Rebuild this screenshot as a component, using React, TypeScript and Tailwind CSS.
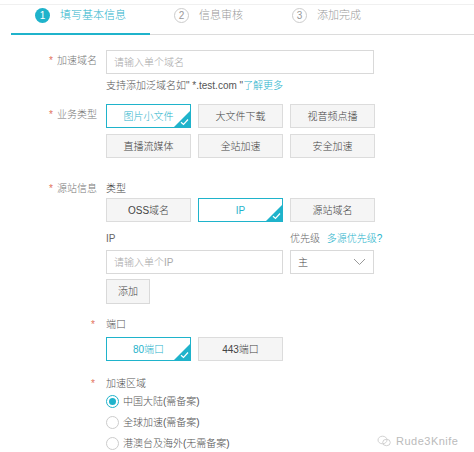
import React from "react";

function Check() {
  return (
    <span className="absolute right-0 bottom-0 w-[16px] h-[16px] overflow-hidden">
      <span className="absolute right-0 bottom-0 w-0 h-0 border-l-[16px] border-l-transparent border-b-[16px] border-b-[#1fb3cb]" />
      <svg className="absolute right-[1px] bottom-[1px]" width="9" height="8" viewBox="0 0 9 8">
        <path d="M1 4.2 L3.5 6.5 L8 1.5" stroke="#fff" strokeWidth="1.2" fill="none" />
      </svg>
    </span>
  );
}

function Btn({ label, selected, w = "w-[85px]" }: { label: string; selected?: boolean; w?: string }) {
  return selected ? (
    <div className={`relative ${w} h-[24px] flex items-center justify-center border border-[#1fb3cb] bg-white text-[#1fb3cb] text-[10px] font-light`}>
      {label}
      <Check />
    </div>
  ) : (
    <div className={`${w} h-[24px] flex items-center justify-center border border-[#dcdcdc] bg-[#f5f5f5] text-[#444] text-[10px] font-light`}>
      {label}
    </div>
  );
}

function Label({ text }: { text: string }) {
  return (
    <div className="w-[106px] shrink-0 pr-[9px] text-right text-[10px] text-[#777] leading-[14px] font-light">
      <span className="text-[#e2725b] mr-[4px]">*</span>
      {text}
    </div>
  );
}

function Radio({ label, checked }: { label: string; checked?: boolean }) {
  return (
    <div className="flex items-center h-[21px]">
      <span
        className={`w-[13px] h-[13px] rounded-full border flex items-center justify-center ${
          checked ? "border-[#1fb3cb]" : "border-[#ccc]"
        }`}
      >
        {checked && <span className="w-[7px] h-[7px] rounded-full bg-[#1fb3cb]" />}
      </span>
      <span className="ml-[4px] text-[10px] text-[#555] font-light">{label}</span>
    </div>
  );
}

export default function App() {
  return (
    <div
      className="relative w-[474px] h-[452px] bg-white overflow-hidden"
      style={{ fontFamily: '"Liberation Sans", "Noto Sans CJK SC", sans-serif' }}
    >
      {/* Steps */}
      <div className="h-[5px] border-b border-[#f0f0f0]" />
      <div className="relative h-[28px] flex items-center text-[11px] font-light">
        <div className="absolute left-[35px] top-[2px] flex items-center">
          <span className="w-[15px] h-[15px] rounded-full bg-[#1fb3cb] text-white text-[10px] flex items-center justify-center">1</span>
          <span className="ml-[10px] text-[#1fb3cb]">填写基本信息</span>
        </div>
        <div className="absolute left-[174px] top-[2px] flex items-center">
          <span className="w-[15px] h-[15px] rounded-full border border-[#ccc] text-[#999] text-[10px] flex items-center justify-center">2</span>
          <span className="ml-[10px] text-[#999]">信息审核</span>
        </div>
        <div className="absolute left-[292px] top-[2px] flex items-center">
          <span className="w-[15px] h-[15px] rounded-full border border-[#ccc] text-[#999] text-[10px] flex items-center justify-center">3</span>
          <span className="ml-[10px] text-[#999]">添加完成</span>
        </div>
      </div>
      <div className="flex">
        <div className="ml-[11px] w-[139px] h-[2px] bg-[#1fb3cb]" />
        <div className="flex-1 mt-[1px] h-[1px] bg-[#dcdcdc]" />
      </div>

      {/* 加速域名 */}
      <div className="flex mt-[15px]">
        <div className="pt-[4px]">
          <Label text="加速域名" />
        </div>
        <div>
          <div className="w-[268px] h-[24px] border border-[#d9d9d9] flex items-center px-[7px] text-[10px] text-[#aaa] font-light">
            请输入单个域名
          </div>
          <div className="mt-[6px] text-[10px] text-[#555] leading-[12px] font-light">
            支持添加泛域名如" *.test.com "<span className="text-[#1fb3cb]">了解更多</span>
          </div>
        </div>
      </div>

      {/* 业务类型 */}
      <div className="flex mt-[12px]">
        <div className="pt-[4px]">
          <Label text="业务类型" />
        </div>
        <div className="flex flex-col gap-[6px]">
          <div className="flex gap-[7px]">
            <Btn label="图片小文件" selected />
            <Btn label="大文件下载" />
            <Btn label="视音频点播" />
          </div>
          <div className="flex gap-[7px]">
            <Btn label="直播流媒体" />
            <Btn label="全站加速" />
            <Btn label="安全加速" />
          </div>
        </div>
      </div>

      {/* 源站信息 */}
      <div className="flex mt-[24px]">
        <Label text="源站信息" />
        <div>
          <div className="text-[10px] text-[#444] leading-[14px] font-light">类型</div>
          <div className="flex gap-[7px] mt-[2px]">
            <Btn label="OSS域名" />
            <Btn label="IP" selected />
            <Btn label="源站域名" />
          </div>
          <div className="flex mt-[10px] text-[10px] leading-[14px] font-light">
            <div className="w-[184px] text-[#666]">IP</div>
            <div className="text-[#666]">
              优先级 <span className="ml-[4px] text-[#1fb3cb]">多源优先级?</span>
            </div>
          </div>
          <div className="flex gap-[7px] mt-[4px]">
            <div className="w-[177px] h-[24px] border border-[#d9d9d9] flex items-center px-[7px] text-[10px] text-[#aaa] font-light">
              请输入单个IP
            </div>
            <div className="w-[84px] h-[24px] border border-[#d9d9d9] flex items-center justify-between px-[7px] text-[10px] text-[#444] font-light">
              <span>主</span>
              <svg width="13" height="8" viewBox="0 0 13 8">
                <path d="M1 1 L6.5 6.5 L12 1" stroke="#999" strokeWidth="1" fill="none" />
              </svg>
            </div>
          </div>
          <div className="mt-[5px] w-[44px] h-[25px] border border-[#d9d9d9] bg-[#f5f5f5] flex items-center justify-center text-[10px] text-[#444] font-light">
            添加
          </div>

          {/* 端口 */}
          <div className="relative mt-[14px] text-[10px] text-[#555] leading-[14px] font-light">
            <span className="absolute left-[-15px] text-[#e2725b]">*</span>
            端口
          </div>
          <div className="flex gap-[7px] mt-[5px]">
            <Btn label="80端口" selected />
            <Btn label="443端口" />
          </div>

          {/* 加速区域 */}
          <div className="relative mt-[16px] text-[10px] text-[#555] leading-[14px] font-light">
            <span className="absolute left-[-15px] text-[#e2725b]">*</span>
            加速区域
          </div>
          <div className="mt-[0px] flex flex-col">
            <Radio label="中国大陆(需备案)" checked />
            <Radio label="全球加速(需备案)" />
            <Radio label="港澳台及海外(无需备案)" />
          </div>
        </div>
      </div>

      {/* watermark */}
      <div className="absolute left-[377px] top-[433px] flex items-center text-[#bbb] text-[11px]">
        <svg width="14" height="12" viewBox="0 0 14 12">
          <ellipse cx="5.5" cy="5" rx="4.5" ry="3.8" fill="none" stroke="#ccc" strokeWidth="0.9" />
          <ellipse cx="9.5" cy="7.5" rx="3.8" ry="3.2" fill="none" stroke="#ccc" strokeWidth="0.9" />
        </svg>
        <span className="ml-[5px] tracking-[0.5px]">Rude3Knife</span>
      </div>
    </div>
  );
}
